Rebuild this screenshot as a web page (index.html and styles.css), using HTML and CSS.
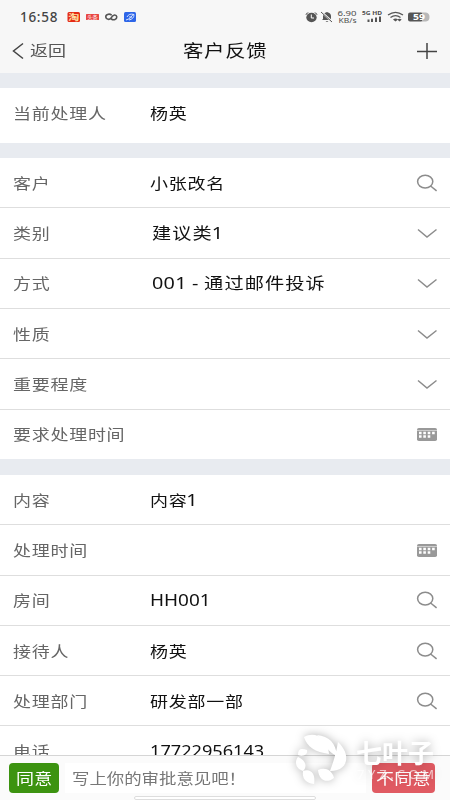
FILE: index.html
```
<!DOCTYPE html>
<html lang="zh-CN">
<head>
<meta charset="utf-8">
<title>客户反馈</title>
<link rel="stylesheet" href="styles.css">
</head>
<body>
<svg width="0" height="0" class="defs">
  <symbol id="search" viewBox="0 0 22 20"><ellipse cx="9.2" cy="8.6" rx="7.6" ry="6.3"/><path d="M14.6 13L20.6 17.800"/></symbol>
  <symbol id="down" viewBox="0 0 22 20"><path d="M2 6.500L11 14L20.500 6.500"/></symbol>
  <symbol id="keys" viewBox="0 0 22 20"><rect class="key-body" x="1" y="4" width="20" height="13" rx="1.8"/><path class="key-line" d="M1 6.5H21"/><path class="key-dots" d="M3 9H5.6M7.3 9H9.9M11.7 9H14.3M16.1 9H18.7M3 12.5H5.6M7.3 12.5H9.9M11.7 12.5H14.3"/></symbol>
</svg>
<div class="phone">
  <header>
    <div class="status">
      <span class="clock">16:58</span>
      <svg class="apps" width="78" height="14" viewBox="0 0 78 14">
        <rect x="0.500" y="2" width="12.500" height="10" rx="1.500" fill="#e52b16"/>
        <rect x="19" y="4" width="13" height="6" rx=".5" fill="#e94743"/>
        <path d="M44.700 5.100C42 3.200 38.500 4.500 38.800 7.100C39.200 9.700 42.600 10.200 44.300 7.700C46 4.200 49.300 4.200 49.800 6.900C49.900 9.500 46.700 10.500 44.200 9" fill="none" stroke="#555" stroke-width="1.600"/>
        <rect x="57" y="2" width="12" height="10" rx="1.500" fill="#2e66e8"/>
        <path d="M59 10Q63 10 66.500 4M60 7Q62 3 67 4.500Q67 9 62 10M62 7H65" fill="none" stroke="#d8e4ff" stroke-width="1"/>
        <text x="1.200" y="9.800" font-size="8" textLength="11" lengthAdjust="spacingAndGlyphs" fill="#ffe5a5" font-weight="bold">淘</text>
        <text x="20.200" y="9" font-size="5" textLength="10.500" lengthAdjust="spacingAndGlyphs" fill="#fff">头条</text>
      </svg>
      <svg class="signals" width="126" height="16" viewBox="0 0 126 16">
        <g fill="#555">
          <ellipse cx="6.500" cy="8.500" rx="5.200" ry="4.700"/><path d="M.4 6Q1 3.300 4 3L1 6ZM12.600 6Q12 3.300 9 3L12 6Z"/>
          <path d="M17 11L18 10V7Q18 4 22 3Q26 4 26 7V11ZM20.500 12H23.500L22 13Z"/>
          <rect x="62.500" y="10.500" width="2" height="2.500"/><rect x="66" y="9.700" width="2" height="3.300"/><rect x="70" y="8.500" width="2" height="4.500"/><rect x="74" y="7.500" width="2" height="5.500"/>
          <rect x="103" y="3.500" width="15" height="9" rx="2"/><path fill="#b8b8b8" d="M117 3.500H121Q124.500 4 124.500 8Q124.500 12 121 12.500H117Z"/>
          <path d="M94.500 12.500L92.300 10.500Q94.500 9 96.700 10.500Z"/>
        </g>
        <path d="M6.300 5.500V9H9" fill="none" stroke="#fff"/>
        <path d="M16.500 3L27.500 13" stroke="#f7f7f7" stroke-width="2"/><path d="M16 3L27 13" stroke="#555" stroke-width="1"/>
        <path d="M83 6Q90.500 .6 98 6M85.500 8.500Q90.500 4.800 95.500 8.500" fill="none" stroke="#555" stroke-width="1.300"/>
        <path d="M88 10.500Q90.500 8.600 93 10.500L90.500 12.500Z" fill="#555"/>
        <g fill="#4c4c4c">
          <text x="32.500" y="7" font-size="7.500" textLength="19" lengthAdjust="spacingAndGlyphs">6.90</text>
          <text x="33.500" y="13.800" font-size="6.200" textLength="18" lengthAdjust="spacingAndGlyphs">KB/s</text>
          <text x="57" y="5.700" font-size="5.500" font-weight="bold" textLength="20" lengthAdjust="spacingAndGlyphs">5G HD</text>
          <text x="108" y="11.200" font-size="8.500" font-weight="bold" fill="#fff" textLength="12" lengthAdjust="spacingAndGlyphs">59</text>
        </g>
      </svg>
    </div>
    <div class="nav">
      <a class="back"><svg width="13" height="18" viewBox="0 0 13 18"><path d="M11 1.500L1.500 9L11 16.500"/></svg><span class="t">返回</span></a>
      <h1 class="t">客户反馈</h1>
      <svg class="plus" width="22" height="18" viewBox="0 0 22 18"><path d="M1 9.500H21M11 1V17"/></svg>
    </div>
  </header>
  <main>
    <section>
      <div class="row person"><label class="t">当前处理人</label><span class="t value">杨英</span></div>
    </section>
    <section>
      <div class="row"><label class="t">客户</label><span class="t value">小张改名</span><svg class="icon"><use href="#search"/></svg></div>
      <div class="row"><label class="t">类别</label><span class="t value option">建议类<span class="digit">1</span></span><svg class="icon"><use href="#down"/></svg></div>
      <div class="row"><label class="t">方式</label><span class="t value option"><span class="code">001 - </span>通过邮件投诉</span><svg class="icon"><use href="#down"/></svg></div>
      <div class="row"><label class="t">性质</label><svg class="icon"><use href="#down"/></svg></div>
      <div class="row"><label class="t">重要程度</label><svg class="icon"><use href="#down"/></svg></div>
      <div class="row"><label class="t">要求处理时间</label><svg class="icon"><use href="#keys"/></svg></div>
    </section>
    <section>
      <div class="row"><label class="t">内容</label><span class="t value">内容<span class="digit">1</span></span></div>
      <div class="row"><label class="t">处理时间</label><svg class="icon"><use href="#keys"/></svg></div>
      <div class="row"><label class="t">房间</label><span class="t value room">HH001</span><svg class="icon"><use href="#search"/></svg></div>
      <div class="row"><label class="t">接待人</label><span class="t value">杨英</span><svg class="icon"><use href="#search"/></svg></div>
      <div class="row"><label class="t">处理部门</label><span class="t value">研发部一部</span><svg class="icon"><use href="#search"/></svg></div>
      <div class="row"><label class="t">电话</label><span class="t value number">17722956143</span></div>
    </section>
  </main>
  <footer>
    <button class="agree"><span class="t">同意</span></button>
    <div class="opinion"><span class="t">写上你的审批意见吧！</span></div>
    <button class="reject"><span class="t">不同意</span></button>
    <i class="home"></i>
  </footer>
  <svg class="watermark" width="160" height="70" viewBox="0 0 160 70">
    <g fill="#fff">
      <path d="M14 17C24 11 38 17 39 34C25 32 17 27 14 17Z"/>
      <path d="M27 15C39 16 46 23 47 36C37 32 34 22 27 15Z"/>
      <path d="M48 22C61 34 59 51 40 51C43 43 46 34 48 22Z"/>
      <path d="M28 50C35 47 42 50 44 58C36 64 29 60 28 50Z"/>
      <path d="M13 51C20 48 26 53 24 64C15 63 12 58 13 51Z"/>
      <path d="M8 37C15 40 18 46 13 51C6 49 4 42 8 37Z"/>
      <path d="M8 35C8 29 11 28 17 30C18 34 14 37 8 35Z"/>
      <text x="66" y="43" font-size="26" font-weight="bold" textLength="78" lengthAdjust="spacingAndGlyphs">七叶子</text>
      <text x="67" y="59" font-size="13" fill-opacity=".65" textLength="77" lengthAdjust="spacing">7YZ.COM</text>
    </g>
  </svg>
</div>
</body>
</html>
```

FILE: styles.css
```
* { box-sizing: border-box; }
body { margin: 0; font-family: "Noto Sans", "Noto Sans CJK SC", sans-serif; color: #111; }
.defs { position: absolute; }
.phone { position: relative; width: 450px; height: 800px; overflow: hidden; display: flex; flex-direction: column; background: #fff; }
.t { display: inline-block; white-space: nowrap; transform: scaleX(1.2); transform-origin: left center; }

header { height: 73px; flex: none; background: #f7f7f7; }
.status { height: 32px; display: flex; align-items: center; padding: 2px 19px 0 20px; }
.clock { width: 47px; font: 500 13.500px/16px "Noto Sans", sans-serif; color: #444; letter-spacing: .7px; }
.signals { margin-left: auto; }
.nav { height: 37px; display: grid; grid-template-columns: 171px 1fr 22px; align-items: center; padding: 0 12px; }
.back { display: flex; align-items: center; gap: 5px; font-size: 15px; line-height: 20px; color: #555; }
.back svg, .plus { fill: none; stroke: #444; stroke-width: 1.5; }
.back .t { position: relative; top: -1px; }
h1 { margin: 0; font-size: 17px; line-height: 24px; font-weight: 400; letter-spacing: .6px; }

main { flex: 1; min-height: 0; overflow: hidden; background: #e8ebf0; }
section { margin-bottom: 15px; background: #fff; }
section:first-child { margin-top: 15px; }
.row { height: 50.3px; display: flex; align-items: center; padding: 0 12px 0 13px; font-size: 15px; line-height: 22px; letter-spacing: .6px; border-bottom: 1px solid #dedede; }
.row:last-child { border-bottom-color: #e8ebf0; }
.row.person { height: 55.200px; padding-bottom: 5px; border-bottom: 0; }
label { width: 137.300px; flex: none; color: #666; }
.value { font-size: 15px; }
.option { margin-left: 2px; font-size: 16px; letter-spacing: .9px; }
.digit { font-size: 16.500px; letter-spacing: 0; margin-left: -1px; }
.code { font-size: 16.500px; letter-spacing: .2px; }
.room { font-size: 16.500px; transform: scaleX(1.15); letter-spacing: 0; }
.number { font-size: 16.500px; transform: scaleX(1.1); letter-spacing: 0; }
.icon { width: 22px; height: 20px; margin-left: auto; flex: none; fill: none; stroke: #8c8c8c; stroke-width: 1.5; }
.key-body { fill: #999; stroke: none; }
.key-line { stroke: #ccc; stroke-width: 1; }
.key-dots { stroke: #fff; stroke-width: 2.3; }

footer { position: relative; height: 45px; flex: none; display: flex; align-items: flex-start; padding: 7px 15px 0 9px; background: #fbfbfb; border-top: 1px solid #d5d5d5; }
button { width: 50px; height: 30px; padding: 0 0 0 7px; border: 0; border-radius: 4px; text-align: left; font: 15px/30px "Noto Sans CJK SC", sans-serif; color: #fff; background: #3c9310; }
.reject { width: 63px; padding-left: 4px; background: #e05a62; }
.agree .t, .reject .t { letter-spacing: .2px; }
.opinion { flex: 1; height: 30px; margin: 0 6px; padding-left: 7px; font-size: 14.500px; line-height: 30px; color: #777; background: #fff; }
.home { position: absolute; left: 134px; bottom: 0; width: 182px; height: 4px; border: 1px solid #ddd; border-radius: 3px; background: #fff; }
.watermark { position: absolute; left: 290px; top: 720px; overflow: visible; filter: drop-shadow(0 0 5px rgba(0, 0, 0, .3)); }
```
